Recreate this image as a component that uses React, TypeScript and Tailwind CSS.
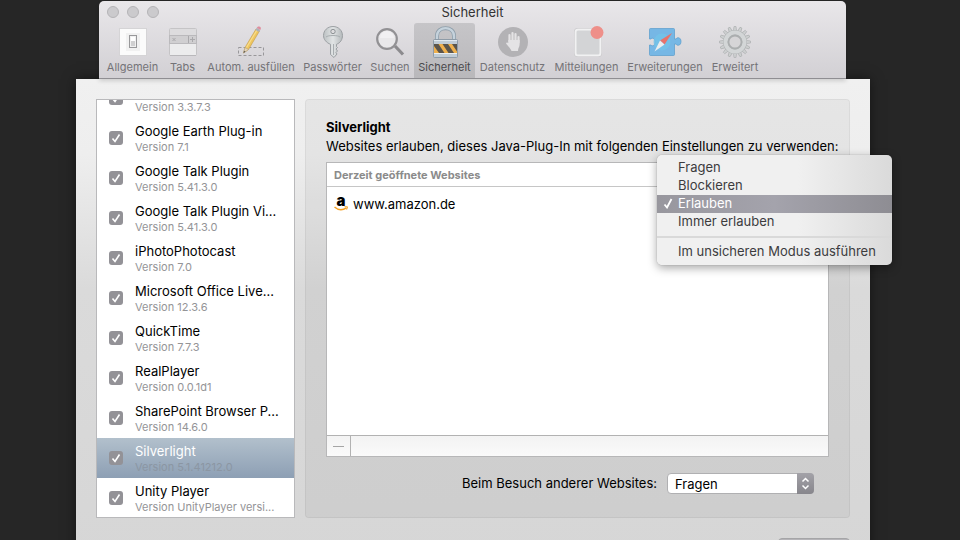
import React from "react";

function GeneralIcon() {
  return (
    <svg width="34" height="34" viewBox="0 0 34 34">
      <rect x="3.5" y="3.5" width="27" height="27" fill="#fbfbfb" stroke="#d5d4d6" />
      <rect x="10" y="8" width="14" height="18" fill="#f1f1f1" />
      <rect x="13.5" y="10.5" width="7" height="12" fill="#f0f0f0" stroke="#98989a" />
      <rect x="15" y="12" width="4" height="4" fill="#ffffff" />
      <rect x="15" y="16" width="4" height="5" fill="#d0d0d1" />
    </svg>
  );
}

function TabsIcon() {
  return (
    <svg width="34" height="34" viewBox="0 0 34 34">
      <rect x="3.5" y="3.5" width="27" height="27" rx="1" fill="#ececed" stroke="#c5c4c6" />
      <rect x="4" y="4" width="26" height="7" fill="#dddcde" />
      <rect x="3.5" y="10.5" width="27" height="8" fill="#d0cfd1" stroke="#bab9bc" />
      <path d="M22.5 11v7M6.5 13l3 3M9.5 13l-3 3M24 14.5h5M26.5 12v5" stroke="#aaa9ac" fill="none" />
      <path d="M4 30.5h26" stroke="#b9b8bb" />
    </svg>
  );
}

function PencilIcon() {
  return (
    <svg width="34" height="34" viewBox="0 0 34 34">
      <rect x="4.5" y="22.5" width="25" height="8" fill="none" stroke="#98979a" strokeDasharray="3 2" />
      <path d="M9.500 28l1.500-5.500L22 4l3.500 2L14.500 24.500z" fill="#eec65f" stroke="#c39a4c" strokeWidth=".6" />
      <path d="M12.500 22.5L23 5" stroke="#f8dd8c" strokeWidth="1.2" />
      <path d="M9.500 28l1.500-5.500 3.500 2z" fill="#e5d4b8" stroke="#ab9c83" strokeWidth=".5" />
      <path d="M9.500 28l.6-2.200 1.400.9z" fill="#555" />
      <path d="M21.500 5l1.300-2.200 3.500 2.100L25 7.100z" fill="#aeb2b8" />
      <path d="M22.800 2.800c1-1.600 2-1.700 3.100-1 1.100.7 1.300 1.700.4 3.100z" fill="#df8d9d" />
    </svg>
  );
}

function KeyIcon() {
  return (
    <svg width="34" height="34" viewBox="0 0 34 34">
      <defs>
        <linearGradient id="key" x1="0" x2="1">
          <stop offset="0" stopColor="#bcc1c3" />
          <stop offset=".5" stopColor="#e1e4e5" />
          <stop offset="1" stopColor="#b4b9bb" />
        </linearGradient>
      </defs>
      <path
        d="M17 1.500c5.500 0 9.500 4 9.500 9 0 4-2 7.300-6 8.800v2.200l1 1-1.500 1.500 1.500 2-1.500 1.500 1 1.500-3 3.500-3.500-3V19.300c-4-1.500-7-4.800-7-8.800 0-5 4-9 9.500-9z"
        fill="url(#key)"
        stroke="#969b9e"
        strokeWidth=".9"
      />
      <circle cx="17" cy="6.5" r="2.200" fill="#dddcde" stroke="#8e9396" />
      <path d="M10 12c2-2 12-2 14 0M17.500 19v11" fill="none" stroke="#a8adb0" />
    </svg>
  );
}

function SearchIcon() {
  return (
    <svg width="34" height="34" viewBox="0 0 34 34">
      <path d="M22 21l8 8.500" stroke="#8c8b8e" strokeWidth="3.200" />
      <circle cx="14" cy="14" r="9.800" fill="#e9e8ea" stroke="#929194" strokeWidth="2.200" />
      <path d="M7 13a7 7 0 0 1 14 0z" fill="#f1f0f2" />
    </svg>
  );
}

function LockIcon() {
  return (
    <svg width="34" height="34" viewBox="0 0 34 34">
      <path d="M9 17v-6c0-10.500 17-10.500 17 0v6" fill="none" stroke="#8d9da9" strokeWidth="4" />
      <path d="M9 17v-6c0-10.500 17-10.500 17 0v6" fill="none" stroke="#c5d2dc" strokeWidth="2.400" />
      <rect x="5.5" y="14.5" width="24" height="18" rx="1" fill="#c0ccd6" stroke="#8e9ba7" />
      <path d="M6 15.500h23" stroke="#e2eaf0" />
      <rect x="6" y="19" width="23" height="9" fill="#efb04d" />
      <path d="M6 19h4.500l6 9H11l-5-7zM14.500 19H20l6 9h-5.500zM24 19h5v7.500z" fill="#5b554c" />
      <path d="M6 28.500h23" stroke="#e9eef2" />
    </svg>
  );
}

function HandIcon() {
  return (
    <svg width="34" height="34" viewBox="0 0 34 34">
      <circle cx="17" cy="17" r="15" fill="#b3b2b5" />
      <path d="M13.500 17V10M16.500 16V8M19.500 16V9M22.500 17.500V12" stroke="#e4e3e5" strokeWidth="2.200" strokeLinecap="round" />
      <path
        d="M12.400 15h11.200v4.500c0 2.500-1.600 3.500-1.600 6.500h-6.500c-.4-2.200-3-4.200-5.100-7.100-1-1.400.8-2.100 2-.9z"
        fill="#e4e3e5"
      />
    </svg>
  );
}

function NotificationIcon() {
  return (
    <svg width="34" height="34" viewBox="0 0 34 34">
      <rect x="5.500" y="4.500" width="25" height="26" rx="2.500" fill="none" stroke="#c2c1c4" strokeWidth="3" />
      <rect x="5.500" y="4.500" width="25" height="26" rx="2.500" fill="#d3d4d6" stroke="#f1f1f2" strokeWidth="2" />
      <circle cx="27" cy="7.500" r="6.500" fill="#ee8f89" />
    </svg>
  );
}

function ExtensionIcon() {
  return (
    <svg width="34" height="34" viewBox="0 0 34 34">
      <path
        d="M2.500 3.500h23q1 0 1 1V14h1.500c1-2 5-2 5 2.500s-4 4.500-5 2.500h-1.500v10.500q0 1-1 1h-23q-1 0-1-1V20h1.500c1 1.500 4 1 4-3s-3-4.500-4-3H1.500V4.500q0-1 1-1z"
        fill="#76b7e5"
        stroke="#599ccb"
        strokeWidth=".7"
      />
      <circle cx="14" cy="17" r="8.500" fill="#72c5ea" opacity=".7" />
      <path d="M24 8L12 15.500l4.500 4z" fill="#e8736b" />
      <path d="M6.500 26.500l5.500-11 4.500 4z" fill="#e9edef" />
    </svg>
  );
}

const gearTeeth = Array.from({ length: 16 }, (_, i) => i * 22.5);

function GearIcon() {
  return (
    <svg width="34" height="34" viewBox="0 0 34 34">
      {gearTeeth.map((a) => (
        <path
          key={a}
          d="M15.300 6.500l.7-5h2l.7 5z"
          transform={`rotate(${a} 17 17)`}
          fill="#ced0d1"
          stroke="#adb0b1"
          strokeWidth=".7"
        />
      ))}
      <circle cx="17" cy="17" r="9.500" fill="none" stroke="#b1b4b5" strokeWidth="5" />
      <circle cx="17" cy="17" r="9.500" fill="none" stroke="#d3d6d7" strokeWidth="4" />
      <circle cx="17" cy="17" r="6.500" fill="#d6d5d7" stroke="#abaeaf" strokeWidth="1.800" />
    </svg>
  );
}

const tools = [
  { label: "Allgemein", icon: <GeneralIcon />, width: "w-[59px]" },
  { label: "Tabs", icon: <TabsIcon />, width: "w-[41px]" },
  { label: "Autom. ausfüllen", icon: <PencilIcon />, width: "w-24" },
  { label: "Passwörter", icon: <KeyIcon />, width: "w-[67px]" },
  { label: "Suchen", icon: <SearchIcon />, width: "w-12" },
  { label: "Sicherheit", icon: <LockIcon />, width: "w-[61px]", active: true },
  { label: "Datenschutz", icon: <HandIcon />, width: "w-[75px]" },
  { label: "Mitteilungen", icon: <NotificationIcon />, width: "w-[73px]" },
  { label: "Erweiterungen", icon: <ExtensionIcon />, width: "w-[84px]" },
  { label: "Erweitert", icon: <GearIcon />, width: "w-14" },
];

function Toolbar() {
  return (
    <header className="relative mt-px mr-6 ml-[23px] flex h-[78px] flex-col rounded-t-[5px] border-b border-[#8f8e92] bg-linear-to-b from-[#e9e7ea] to-[#d2d0d4] shadow-[0_2px_4px_rgba(0,0,0,0.15)]">
      <div className="grid h-[22px] shrink-0 grid-cols-3 items-center">
        <div className="flex gap-2 pl-2">
          {["Schließen", "Minimieren", "Vergrößern"].map((name) => (
            <button
              key={name}
              aria-label={name}
              className="size-3 rounded-full border border-[#b5b4b7] bg-[#cbcacd]"
            />
          ))}
        </div>
        <h1 className="text-center text-[13px] leading-4 text-[#333]">Sicherheit</h1>
      </div>
      <nav className="flex grow pl-1">
        {tools.map((t) => (
          <button
            key={t.label}
            aria-pressed={!!t.active}
            className={`flex shrink-0 flex-col items-center whitespace-nowrap rounded-t-[3px] pt-[2px] text-[11px] leading-4 ${t.width} ${
              t.active ? "bg-linear-to-b from-[#c6c5c8] to-[#b9b8bb] text-[#4a494c]" : "text-[#747377]"
            }`}
          >
            {t.icon}
            {t.label}
          </button>
        ))}
      </nav>
    </header>
  );
}

const plugins = [
  { name: "", version: "Version 3.3.7.3" },
  { name: "Google Earth Plug-in", version: "Version 7.1" },
  { name: "Google Talk Plugin", version: "Version 5.41.3.0" },
  { name: "Google Talk Plugin Vi...", version: "Version 5.41.3.0" },
  { name: "iPhotoPhotocast", version: "Version 7.0" },
  { name: "Microsoft Office Live...", version: "Version 12.3.6" },
  { name: "QuickTime", version: "Version 7.7.3" },
  { name: "RealPlayer", version: "Version 0.0.1d1" },
  { name: "SharePoint Browser P...", version: "Version 14.6.0" },
  { name: "Silverlight", version: "Version 5.1.41212.0", selected: true },
  { name: "Unity Player", version: "Version UnityPlayer versi..." },
];

function PluginList() {
  return (
    <ul className="h-[419px] w-[199px] shrink-0 overflow-hidden border border-[#b9b9bb] bg-white">
      {plugins.map((p, i) => (
        <li key={p.name} className={i === 0 ? "-mt-[22px]" : ""}>
          <label
            className={`flex h-10 items-center gap-3 pl-3 ${
              p.selected ? "bg-linear-to-b from-[#b2c0cc] to-[#8d9fb4]" : ""
            }`}
          >
            <span className="grid shrink-0">
              <input
                type="checkbox"
                defaultChecked
                className="col-start-1 row-start-1 size-[14px] appearance-none rounded-[3px] bg-[#939297]"
              />
              <svg className="pointer-events-none col-start-1 row-start-1" width="14" height="14" viewBox="0 0 14 14">
                <path d="M3.500 7.500l2.500 3 4.500-7" fill="none" stroke="#fff" strokeWidth="1.600" />
              </svg>
            </span>
            <span className="min-w-0 whitespace-nowrap pt-[2px]">
              <span className={`block h-4 text-[13px] leading-4 ${p.selected ? "text-white" : "text-black"}`}>
                {p.name}
              </span>
              <span className={`block text-[11px] leading-4 ${p.selected ? "text-[#8b96a3]" : "text-[#949497]"}`}>
                {p.version}
              </span>
            </span>
          </label>
        </li>
      ))}
    </ul>
  );
}

const choices = ["Fragen", "Blockieren", "Erlauben", "Immer erlauben"];

function PermissionMenu() {
  return (
    <div
      role="menu"
      className="absolute -top-[7px] -right-[63px] flex w-[235px] flex-col rounded-[5px] bg-linear-to-r from-[#f0f0f0] from-60% to-[#dadada] py-1 text-[13px] leading-4 text-[#3c3c3e] shadow-[0_3px_10px_rgba(0,0,0,0.35),0_0_1px_rgba(0,0,0,0.4)]"
    >
      {choices.map((c) => {
        const on = c === "Erlauben";
        return (
          <button
            key={c}
            role="menuitemradio"
            aria-checked={on}
            className={`flex h-[18px] items-center pb-[2px] text-left ${
              on ? "bg-linear-to-r from-[#98979e] via-[#a4a3ac] to-[#8e8d93] text-white" : ""
            }`}
          >
            <span className="flex w-[21px] justify-center">
              {on && (
                <svg width="10" height="11" viewBox="0 0 10 11">
                  <path d="M1.500 6.500l2.500 3L8.500 1" fill="none" stroke="#fff" strokeWidth="1.800" />
                </svg>
              )}
            </span>
            {c}
          </button>
        );
      })}
      <hr className="my-[5px] border-t-2 border-[#d9d9d9]" />
      <button role="menuitem" className="h-[18px] pb-[2px] pl-[21px] text-left">
        Im unsicheren Modus ausführen
      </button>
    </div>
  );
}

function SiteTable() {
  return (
    <div className="relative mt-[7px]">
      <div className="flex h-[295px] flex-col border border-[#b7b7b8] bg-white">
        <table className="w-full text-left">
          <thead>
            <tr className="h-[23px] border-b border-[#c6c6c6]">
              <th className="pt-px pl-[7px] text-[11px] leading-4 font-bold text-[#8b8b8b]">
                Derzeit geöffnete Websites
              </th>
            </tr>
          </thead>
          <tbody>
            <tr>
              <td className="pt-[7px] pl-[7px] text-[13px] leading-5">
                <span className="flex items-center gap-[5px]">
                  <span className="flex w-[14px] flex-col items-center" aria-hidden="true">
                    <span className="h-[10px] text-[15px] leading-[9px] font-black">a</span>
                    <svg width="14" height="5" viewBox="0 0 14 5">
                      <path d="M.5 1c4 3.500 8 3.500 12 .8" fill="none" stroke="#f6a021" strokeWidth="1.500" />
                      <path d="M10.500.7l3 .1-.8 2.800" fill="none" stroke="#f6a021" />
                    </svg>
                  </span>
                  www.amazon.de
                </span>
              </td>
            </tr>
          </tbody>
        </table>
        <div className="mt-auto flex h-[21px] border-t border-[#b2b2b2] bg-linear-to-b from-[#f3f3f3] to-[#fafafa]">
          <button
            aria-label="Website entfernen"
            className="flex w-6 items-center justify-center border-r border-[#b2b2b2]"
          >
            <span className="h-px w-[11px] bg-[#a5a5a5]" />
          </button>
        </div>
      </div>
      <PermissionMenu />
    </div>
  );
}

export default function App() {
  return (
    <main className="h-screen overflow-hidden bg-[#262626] pr-[90px] pl-[76px] font-[Inter,'Liberation_Sans',sans-serif] text-black">
      <Toolbar />
      <section className="bg-[linear-gradient(#f0f0f0,#eeeeee_15%,#dadada_42%,#d6d6d6)] px-5 pt-5 pb-5 shadow-[0_0_12px_rgba(0,0,0,0.5)]">
        <div className="flex gap-[10px]">
          <PluginList />
          <div className="min-w-0 grow rounded-[4px] border border-black/5 bg-black/4 px-5 pt-[18px]">
            <h2 className="text-[13px] leading-[18px] font-bold">Silverlight</h2>
            <p className="mt-px text-[13px] leading-[18px] whitespace-nowrap">
              Websites erlauben, dieses Java-Plug-In mit folgenden Einstellungen zu verwenden:
            </p>
            <SiteTable />
            <div className="mt-4 mr-[15px] flex items-center justify-end gap-[10px] text-[13px]">
              <label htmlFor="other-sites">Beim Besuch anderer Websites:</label>
              <span className="grid w-[147px]">
                <select
                  id="other-sites"
                  defaultValue="Fragen"
                  className="col-start-1 row-start-1 h-[21px] appearance-none rounded-[4px] border border-[#b0b0b2] bg-white pl-[7px] leading-[18px]"
                >
                  {choices.map((c) => (
                    <option key={c}>{c}</option>
                  ))}
                </select>
                <span className="pointer-events-none col-start-1 row-start-1 flex w-[17px] items-center justify-center justify-self-end rounded-r-[4px] bg-linear-to-b from-[#a3a2a8] to-[#87868c]">
                  <svg width="9" height="13" viewBox="0 0 9 13">
                    <path d="M1.500 4.500l3-3 3 3M1.500 8.500l3 3 3-3" fill="none" stroke="#fff" strokeWidth="1.500" />
                  </svg>
                </span>
              </span>
            </div>
          </div>
        </div>
        <div className="mt-5 flex justify-end">
          <button aria-label="Hilfe" className="h-[21px] w-[72px] rounded-[4px] border border-[#a5a5a7] bg-[#b5b4b8]" />
        </div>
      </section>
    </main>
  );
}
